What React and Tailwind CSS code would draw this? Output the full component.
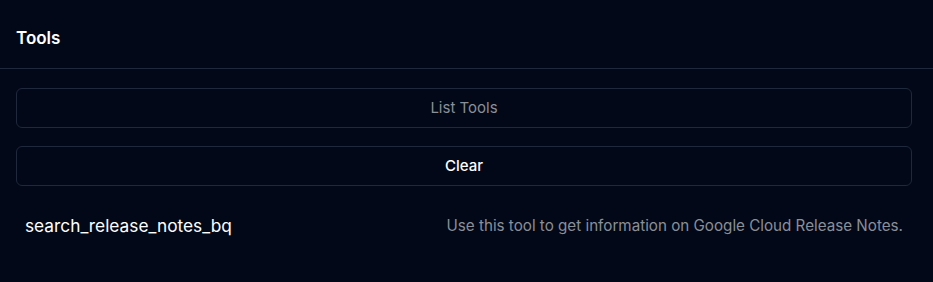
export default function App() {
  return (
    <div
      className="min-h-screen w-full bg-[#020817] text-white"
      style={{ fontFamily: 'Inter, "Noto Sans", sans-serif' }}
    >
      {/* Header */}
      <div className="border-b border-[#1e293b] pl-4 pr-[21px] pt-[26px] pb-[18px]">
        <h2 className="text-[17px] font-semibold leading-6">Tools</h2>
      </div>

      {/* Content */}
      <div className="pl-4 pr-[21px] pt-[19px]">
        <button className="flex h-10 w-full items-center justify-center rounded-md border border-[#1e293b] text-[15px] text-[#8a8f98]">
          List Tools
        </button>
        <button className="mt-[18px] flex h-10 w-full items-center justify-center rounded-md border border-[#1e293b] text-[15px] font-medium text-white">
          Clear
        </button>

        <div className="mt-[20px] flex items-center justify-between px-[9px] py-2">
          <span className="text-[17.3px] leading-6 text-white">search_release_notes_bq</span>
          <span className="text-[15.2px] leading-6 text-[#8a8f98]">
            Use this tool to get information on Google Cloud Release Notes.
          </span>
        </div>
      </div>
    </div>
  );
}
